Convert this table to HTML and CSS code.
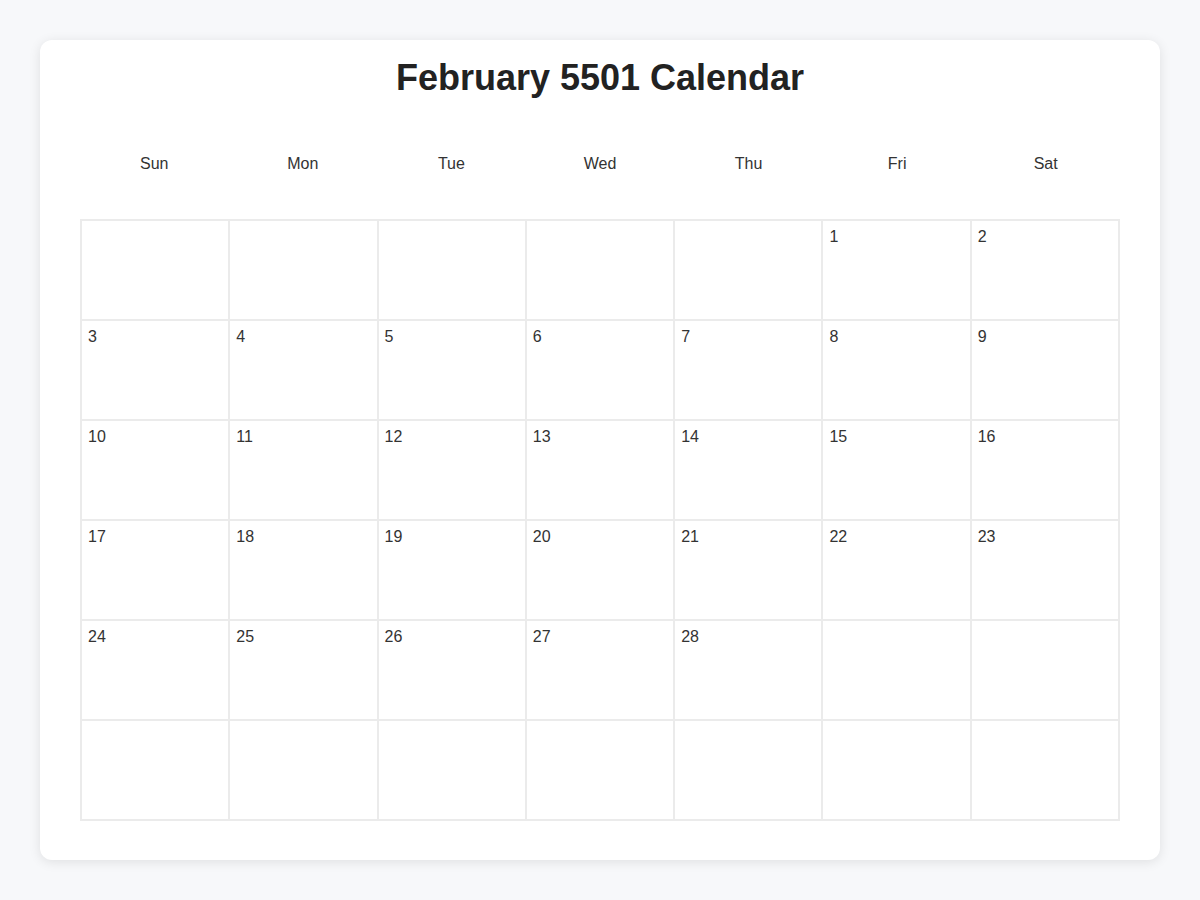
FILE: index.html
```html
<!DOCTYPE html>
<html lang="en">
<head>
<meta charset="utf-8">
<title>February 5501 Calendar</title>
<link rel="stylesheet" href="styles.css">
</head>
<body>
<div class="card">
  <h1 class="title">February 5501 Calendar</h1>
  <div class="weekdays">
    <div class="wd">Sun</div><div class="wd">Mon</div><div class="wd">Tue</div><div class="wd">Wed</div><div class="wd">Thu</div><div class="wd">Fri</div><div class="wd">Sat</div>
  </div>
  <div class="grid">
    <div class="cell"></div><div class="cell"></div><div class="cell"></div><div class="cell"></div><div class="cell"></div><div class="cell">1</div><div class="cell">2</div>
    <div class="cell">3</div><div class="cell">4</div><div class="cell">5</div><div class="cell">6</div><div class="cell">7</div><div class="cell">8</div><div class="cell">9</div>
    <div class="cell">10</div><div class="cell">11</div><div class="cell">12</div><div class="cell">13</div><div class="cell">14</div><div class="cell">15</div><div class="cell">16</div>
    <div class="cell">17</div><div class="cell">18</div><div class="cell">19</div><div class="cell">20</div><div class="cell">21</div><div class="cell">22</div><div class="cell">23</div>
    <div class="cell">24</div><div class="cell">25</div><div class="cell">26</div><div class="cell">27</div><div class="cell">28</div><div class="cell"></div><div class="cell"></div>
    <div class="cell"></div><div class="cell"></div><div class="cell"></div><div class="cell"></div><div class="cell"></div><div class="cell"></div><div class="cell"></div>
  </div>
</div>
</body>
</html>
```
FILE: styles.css
```css
html, body {
  margin: 0;
  padding: 0;
}
body {
  background: #f7f8fa;
  font-family: "Liberation Sans", Arial, sans-serif;
  color: #333;
  padding: 40px;
}
.card {
  background: #fff;
  border-radius: 12px;
  box-shadow: 0 2px 12px rgba(0, 0, 0, 0.1);
  padding: 20px 40px 39px;
}
.title {
  margin: 0;
  text-align: center;
  font-size: 36px;
  font-weight: bold;
  color: #222;
  line-height: 36px;
}
.weekdays {
  display: grid;
  grid-template-columns: repeat(7, 1fr);
  margin-top: 51px;
  margin-bottom: 38px;
}
.wd {
  text-align: center;
  font-size: 16px;
  line-height: 18px;
  padding: 8px 0;
  color: #333;
}
.grid {
  display: grid;
  grid-template-columns: repeat(7, 1fr);
  border: 1px solid #ebebeb;
}
.cell {
  height: 100px;
  box-sizing: border-box;
  border: 1px solid #ebebeb;
  padding: 7px 6px 8px;
  font-size: 16px;
  line-height: 18px;
  color: #333;
}
```
